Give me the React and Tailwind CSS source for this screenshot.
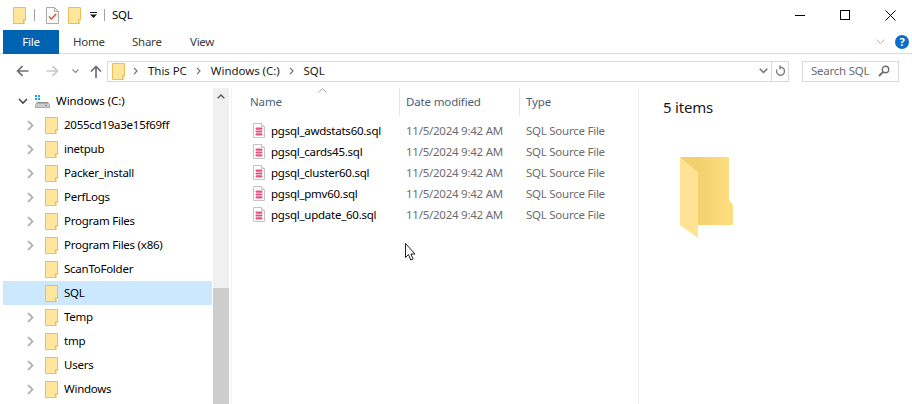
import React from "react";

const FONT = "font-['Noto_Sans','Open_Sans',sans-serif]";

const tree = [
  "2055cd19a3e15f69ff",
  "inetpub",
  "Packer_install",
  "PerfLogs",
  "Program Files",
  "Program Files (x86)",
  "ScanToFolder",
  "SQL",
  "Temp",
  "tmp",
  "Users",
  "Windows",
];

const files = [
  "pgsql_awdstats60.sql",
  "pgsql_cards45.sql",
  "pgsql_cluster60.sql",
  "pgsql_pmv60.sql",
  "pgsql_update_60.sql",
];

const Folder = ({ className = "" }) => (
  <svg width="13" height="17" viewBox="0 0 13 17" className={className}>
    <path d="M.5.5h12v13h-1v3H.5z" fill="#ffe69c" stroke="#e8c15a" />
    <path d="M10.5 16.5v-4h2" fill="none" stroke="#e8c15a" />
    <path d="M11.5 13.5h1v1l-1 2z" fill="#fff" />
  </svg>
);

const SqlFile = () => (
  <svg width="12" height="15" viewBox="0 0 12 15">
    <path d="M.5.5h8l3 3v11H.5z" fill="#fff" stroke="#c4c4c4" />
    <path d="M8.5.5v3h3" fill="#eee" stroke="#c4c4c4" />
    <rect x="2.5" y="4.5" width="7" height="2.2" rx="1" fill="#e2547f" />
    <rect x="2.5" y="7.4" width="7" height="2.2" rx="1" fill="#e2547f" />
    <rect x="2.5" y="10.3" width="7" height="2.2" rx="1" fill="#e2547f" />
  </svg>
);

const Chevron = () => (
  <svg width="7" height="11" viewBox="0 0 7 11">
    <path d="M1 1l4.5 4.5L1 10" fill="none" stroke="#a6a6a6" strokeWidth="1.6" />
  </svg>
);

const Crumb = () => (
  <svg width="5" height="8" viewBox="0 0 5 8" className="block">
    <path d="M1 .8l3 3.2-3 3.2" fill="none" stroke="#707070" strokeWidth="1.2" />
  </svg>
);

const NavArrow = ({ color, flip }) => (
  <svg width="13" height="12" viewBox="0 0 13 12" className={flip ? "rotate-180" : ""}>
    <path d="M12.5 6H2M6.5 1.2L1.6 6l4.9 4.8" fill="none" stroke={color} strokeWidth="1.7" />
  </svg>
);

function TitleBar() {
  return (
    <div className="flex h-[30px] items-center text-[#000]">
      <Folder className="ml-[13px]" />
      <div className="ml-[8px] h-[12px] w-px bg-[#a0a0a0]" />
      <svg width="13" height="17" viewBox="0 0 13 17" className="ml-[11px]">
        <path d="M.5.5h8l4 4v12H.5z" fill="#fafafa" stroke="#a9a9a9" />
        <path d="M8.5.5v4h4" fill="none" stroke="#a9a9a9" />
        <path d="M3 9.5l2.5 2.5L10 7" fill="none" stroke="#d9582b" strokeWidth="1.5" />
      </svg>
      <Folder className="ml-[9px]" />
      <svg width="7" height="7" viewBox="0 0 7 7" className="ml-[9px] mt-px">
        <path d="M0 0h7v1H0zM0 2.5h7L3.5 6z" fill="#1a1a1a" />
      </svg>
      <div className="ml-[7px] h-[12px] w-px bg-[#a0a0a0]" />
      <span className="ml-[7px]">SQL</span>
      <div className="ml-auto mr-[16px] flex items-center gap-[35px]">
        <div className="h-px w-[10px] bg-black" />
        <div className="h-[10px] w-[10px] border border-black" />
        <svg width="11" height="11" viewBox="0 0 11 11">
          <path d="M.5.5l10 10M10.5.5l-10 10" stroke="#000" strokeWidth="1" />
        </svg>
      </div>
    </div>
  );
}

function Ribbon() {
  return (
    <div className="flex h-[24px] items-stretch border-b border-[#dadbdc] pl-[3px] text-[#3b3b3b]">
      <div className="-mb-px flex w-[56px] items-center justify-center bg-[#0063b1] text-white">File</div>
      <span className="ml-[14px] w-[59px] self-center">Home</span>
      <span className="w-[58px] self-center">Share</span>
      <span className="self-center">View</span>
      <div className="ml-auto mr-[3px] flex items-center gap-[10px]">
        <svg width="9" height="6" viewBox="0 0 9 6">
          <path d="M.5.5l4 4 4-4" fill="none" stroke="#b5b5b5" strokeWidth="1" />
        </svg>
        <div className="flex h-[14px] w-[14px] items-center justify-center rounded-full bg-[#0a6ec4] text-[11px] font-bold leading-none text-white">?</div>
      </div>
    </div>
  );
}

function AddressRow() {
  return (
    <div className="flex h-[34px] items-center">
      <div className="ml-[16px] flex items-center">
        <NavArrow color="#707070" />
        <div className="ml-[17px]">
          <NavArrow color="#c8c8c8" flip />
        </div>
        <svg width="7" height="5" viewBox="0 0 7 5" className="ml-[13px]">
          <path d="M.5.5l3 3 3-3" fill="none" stroke="#8a8a8a" strokeWidth="1.2" />
        </svg>
        <svg width="12" height="13" viewBox="0 0 12 13" className="ml-[11px]">
          <path d="M6 13V2M1 6.5L6 1.5l5 5" fill="none" stroke="#707070" strokeWidth="1.7" />
        </svg>
      </div>
      <div className="ml-[5px] flex h-[21px] w-[682px] items-center border border-[#d9d9d9] tracking-[-0.05px] text-[#1a1a1a]">
        <Folder className="ml-[4px]" />
        <span className="ml-[8px]"><Crumb /></span>
        <span className="ml-[10px]">This PC</span>
        <span className="ml-[9px]"><Crumb /></span>
        <span className="ml-[10px]">Windows (C:)</span>
        <span className="ml-[9px]"><Crumb /></span>
        <span className="ml-[10px]">SQL</span>
        <svg width="9" height="6" viewBox="0 0 9 6" className="ml-auto mr-[3px]">
          <path d="M.7.7l3.8 3.8L8.3.7" fill="none" stroke="#707070" strokeWidth="1.5" />
        </svg>
        <div className="flex h-full w-[17px] items-center justify-center border-l border-[#d9d9d9]">
          <svg width="11" height="12" viewBox="0 0 11 12">
            <path d="M5.5 2.2a4 4 0 1 1-3.6 2.3M5 .3v4" fill="none" stroke="#808080" strokeWidth="1.4" />
          </svg>
        </div>
      </div>
      <div className="ml-[13px] flex h-[21px] w-[97px] items-center border border-[#d9d9d9] pl-[8px] text-[#6d6d6d]">
        <span>Search SQL</span>
        <svg width="12" height="12" viewBox="0 0 12 12" className="ml-auto mr-[8px]">
          <circle cx="7.5" cy="4.5" r="3.2" fill="none" stroke="#6d6d6d" strokeWidth="1.4" />
          <path d="M5 7L1 11" stroke="#6d6d6d" strokeWidth="1.8" />
        </svg>
      </div>
    </div>
  );
}

function Sidebar() {
  return (
    <div className="flex w-[232px] shrink-0 text-[#000]">
      <div className="ml-[3px] w-[209px] pt-px">
        <div className="flex h-[24px] items-center">
          <svg width="10" height="7" viewBox="0 0 10 7" className="ml-[15px]">
            <path d="M1 1l4 4 4-4" fill="none" stroke="#4a4a4a" strokeWidth="1.6" />
          </svg>
          <svg width="15" height="14" viewBox="0 0 15 14" className="ml-[7px]">
            <path d="M0 1h2v2H0zM3 1h2v2H3zM0 4h2v2H0zM3 4h2v2H3z" fill="#18a4ea" />
            <path d="M2 8h11l2 3v3H0v-3z" fill="#8f9396" />
            <rect x="0.5" y="9.5" width="14" height="4" fill="#c9cccd" />
            <rect x="10" y="11" width="2" height="1" fill="#2fb344" />
          </svg>
          <span className="ml-[6px] tracking-[-0.05px]">Windows (C:)</span>
        </div>
        {tree.map((name) => (
          <div
            key={name}
            className={`flex h-[24px] items-center ${name === "SQL" ? "bg-[#cce8ff]" : ""}`}
          >
            <span className={`ml-[24px] flex w-[7px] ${name === "ScanToFolder" || name === "SQL" ? "invisible" : ""}`}>
              <Chevron />
            </span>
            <Folder className="ml-[11px]" />
            <span className="ml-[6px]">{name}</span>
          </div>
        ))}
      </div>
      <div className="ml-px flex w-[16px] flex-col bg-[#f0f0f0]">
        <div className="flex h-[17px] items-center justify-center">
          <svg width="8" height="5" viewBox="0 0 8 5">
            <path d="M.7 4.3L4 1l3.3 3.3" fill="none" stroke="#606060" strokeWidth="1.5" />
          </svg>
        </div>
        <div className="mt-[183px] flex-1 bg-[#cdcdcd]" />
      </div>
      <div className="ml-[2px] w-px bg-[#f2f2f2]" />
    </div>
  );
}

function FileList() {
  return (
    <div className="relative w-[407px] shrink-0 border-r border-[#efefef]">
      <svg width="9" height="5" viewBox="0 0 9 5" className="absolute left-[86px] top-0">
        <path d="M.5 4.5l4-4 4 4" fill="none" stroke="#a6a6a6" />
      </svg>
      <div className="flex h-[28px] items-stretch tracking-[-0.15px] text-[#4c607a]">
        <div className="flex w-[168px] items-center border-r border-[#e5e5e5] pl-[18px]">Name</div>
        <div className="flex w-[120px] items-center border-r border-[#e5e5e5] pl-[6px]">Date modified</div>
        <div className="flex items-center pl-[6px]">Type</div>
      </div>
      <div className="mt-[4px]">
        {files.map((file) => (
          <div key={file} className="flex h-[21px] items-center text-[#6d6d6d]">
            <div className="ml-[21px] flex w-[146px] items-center">
              <SqlFile />
              <span className="ml-[6px] text-[#000]">{file}</span>
            </div>
            <span className="ml-[7px] w-[120px]">11/5/2024 9:42 AM</span>
            <span>SQL Source File</span>
          </div>
        ))}
      </div>
      <svg width="12" height="19" viewBox="0 0 12 19" className="absolute left-[173px] top-[155px]">
        <path d="M.5.5v14l3-3 2.2 5.5 2.4-1-2.2-5H10z" fill="#fff" stroke="#222" />
      </svg>
    </div>
  );
}

function Details() {
  return (
    <div className="flex-1 pl-[24px] pt-[8px]">
      <div className="text-[15px] leading-[22px] tracking-[-0.2px] text-[#1a1a1a]">5 items</div>
      <svg width="56" height="82" viewBox="0 0 56 82" className="ml-[17px] mt-[39px]">
        <defs>
          <linearGradient id="back" x1="0" x2="1" y1="0" y2="0">
            <stop offset="0.3" stopColor="#f2cf6f" />
            <stop offset="1" stopColor="#ffe080" />
          </linearGradient>
        </defs>
        <path d="M0 0h49v43l4 5v20H18V20z" fill="url(#back)" />
        <path d="M0 0l18 15v66L0 68z" fill="#ffe294" />
      </svg>
    </div>
  );
}

export default function App() {
  return (
    <div className={`flex h-[404px] w-[912px] flex-col overflow-hidden bg-white text-[11.5px] tracking-[-0.25px] ${FONT}`}>
      <TitleBar />
      <Ribbon />
      <AddressRow />
      <div className="flex min-h-0 flex-1">
        <Sidebar />
        <FileList />
        <Details />
      </div>
    </div>
  );
}
